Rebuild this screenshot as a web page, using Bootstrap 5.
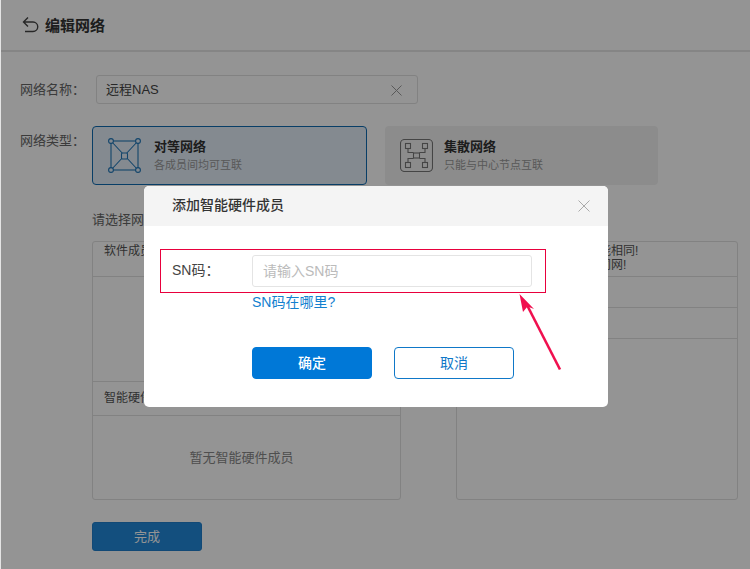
<!DOCTYPE html>
<html lang="zh">
<head>
<meta charset="utf-8">
<title>编辑网络</title>
<link rel="stylesheet" href="https://cdn.jsdelivr.net/npm/bootstrap@5.3.0/dist/css/bootstrap.min.css">
<style>
html,body{height:569px;overflow:hidden}
body{font-family:"Liberation Sans","Noto Sans CJK SC",sans-serif;color:#333;background:#fff;font-size:13px;line-height:1.4}
.page-shell{height:569px;border-left:1px solid #e4e4e4;position:relative}
.top-bar{height:52px;border-bottom:2px solid #e6e6e6;padding-left:21px;gap:6px}
.top-title{font-size:15px;font-weight:700;color:#333}
.form-area{padding:23px 0 0 19px}
.field-label{width:76px;color:#666;flex:none;padding-top:1px}
.name-box{width:322px;height:29px;border:1px solid #e0e0e0;border-radius:3px;padding:1px 15px 0 9px;color:#444}
.type-row{margin-top:22px}
.type-label{width:72px;padding-top:6px}
.type-card{height:59px;border-radius:4px;padding:0 15px}
.type-on{width:275px;background:#e4eef9;border:1px solid #0f6cb2;gap:13px}
.type-off{width:273px;background:#f2f2f2;margin-left:18px;gap:11px}
.type-name{font-size:13px;font-weight:700;color:#333;line-height:18px}
.type-desc{font-size:11px;color:#999;line-height:18px}
.choose-tip{margin:25px 0 0 72px;color:#666;height:20px;line-height:20px}
.panels{margin:11px 0 0 72px;gap:55px}
.panel-box{height:259px;border:1px solid #e0e0e0;border-radius:3px;color:#555;font-size:12px}
.panel-left{width:309px}
.panel-right{width:282px}
.panel-head{height:35px;border-bottom:1px solid #e0e0e0;padding:2px 11px;line-height:15px}
.panel-mid{height:105px;border-bottom:1px solid #e0e0e0}
.panel-head2{height:34px;border-bottom:1px solid #e0e0e0;padding:0 11px}
.empty-note{height:84px;color:#888;font-size:13px;padding-right:10px}
.right-head{height:35px;border-bottom:1px solid #e0e0e0;padding:2px 10px;line-height:14px;white-space:nowrap}
.right-row{height:31px;border-bottom:1px solid #e0e0e0}
.done-btn{margin:22px 0 0 72px;width:110px;height:29px;background:#2289da;color:#fff;border:1px solid #1f7fcc;border-radius:3px;font-size:13px;padding:1px 0 0}
.shade{position:absolute;inset:0;background:rgba(0,0,0,.42);z-index:10}
.dialog-box{position:absolute;left:144px;top:186px;width:464px;height:221px;background:#fff;border-radius:5px;overflow:hidden;z-index:20;border:0;color:#333}
.dialog-head{height:40px;background:#f4f4f4;padding:0 18px 0 28px;font-size:14px;font-weight:500;color:#333;border:0;border-radius:0}
.dialog-body{padding:29px 0 0 28px}
.sn-label{width:80px;font-size:14px;color:#444}
.sn-input{width:280px;height:32px;border:1px solid #e4e4e4;border-radius:3px;font-size:14px;padding:0 10px;color:#333;box-shadow:none}
.sn-input::placeholder{color:#bbb;opacity:1}
.where-link{margin:6px 0 0 80px;color:#1281cf;font-size:14px;text-decoration:none;line-height:19px;display:block}
.action-row{margin:35px 0 0 80px;gap:22px}
.act-main,.act-ghost{width:120px;height:32px;font-size:14px;padding:0;border-radius:4px}
.act-main{background:#0078d7;border:1px solid #0078d7;color:#fff;font-weight:500}
.act-ghost{background:#fff;border:1px solid #0f78c8;color:#0f78c8}
.mark-layer{position:absolute;left:0;top:0;z-index:30;pointer-events:none}
</style>
</head>
<body>
<div class="page-shell">
  <div class="top-bar d-flex align-items-center">
    <svg width="17" height="17" viewBox="0 0 17 17" fill="none" stroke="#444" stroke-width="1.4"><path d="M6 .5 1.500 5 6 9.500M1.500 5H11a4.700 4.700 0 0 1 0 9.500H3"/></svg>
    <span class="top-title">编辑网络</span>
  </div>
  <div class="form-area">
    <div class="d-flex align-items-center">
      <span class="field-label">网络名称：</span>
      <div class="name-box d-flex align-items-center justify-content-between"><span>远程NAS</span>
        <svg width="11" height="11" viewBox="0 0 11 11" stroke="#999" stroke-width="1"><path d="M.5.5l10 10M10.500.5l-10 10"/></svg></div>
    </div>
    <div class="type-row d-flex align-items-start">
      <span class="field-label type-label">网络类型：</span>
      <div class="type-card type-on d-flex align-items-center">
        <svg width="33" height="35" viewBox="0 0 33 35" fill="none" stroke="#1f77b8" stroke-width="1.1"><rect x="3" y="3" width="27" height="29"/><path d="M3 3 30 32M30 3 3 32"/><g fill="#e4eef9"><circle cx="3" cy="3" r="2.400"/><circle cx="30" cy="3" r="2.400"/><circle cx="3" cy="32" r="2.400"/><circle cx="30" cy="32" r="2.400"/><rect x="13.500" y="15" width="6" height="6" rx="1"/></g></svg>
        <div><div class="type-name">对等网络</div><div class="type-desc">各成员间均可互联</div></div>
      </div>
      <div class="type-card type-off d-flex align-items-center">
        <svg width="33" height="33" viewBox="0 0 33 33" fill="none" stroke="#777" stroke-width="1.100"><rect x=".5" y=".5" width="32" height="32" rx="4"/><rect x="5.500" y="4.500" width="5" height="5"/><rect x="22.500" y="4.500" width="5" height="5"/><rect x="5.500" y="23.500" width="5" height="5"/><rect x="22.500" y="23.500" width="5" height="5"/><rect x="13.500" y="14" width="6" height="5"/><path d="M8 9.500V13.500h5.500M25 9.500V13.500h-5.500M8 23.500V19.500h5.500M25 23.500V19.500h-5.500"/></svg>
        <div><div class="type-name">集散网络</div><div class="type-desc">只能与中心节点互联</div></div>
      </div>
    </div>
    <div class="choose-tip">请选择网络成员</div>
    <div class="panels d-flex">
      <div class="panel-box panel-left">
        <div class="panel-head">软件成员</div>
        <div class="panel-mid"></div>
        <div class="panel-head2 d-flex align-items-center">智能硬件成员</div>
        <div class="empty-note d-flex align-items-center justify-content-center">暂无智能硬件成员</div>
      </div>
      <div class="panel-box panel-right">
        <div class="right-head">所有成员的局域网网段不能相同!<br>否则各成员之间无法相互同网!</div>
        <div class="right-row"></div>
        <div class="right-row"></div>
      </div>
    </div>
    <button type="button" class="btn done-btn">完成</button>
  </div>
  <div class="shade"></div>
</div>
<div class="dialog-box modal-content">
  <div class="dialog-head modal-header">
    <span>添加智能硬件成员</span>
    <svg width="12" height="12" viewBox="0 0 12 12" stroke="#aaa" stroke-width="1"><path d="M.5.5l11 11M11.500.5l-11 11"/></svg>
  </div>
  <div class="dialog-body">
    <div class="d-flex align-items-center">
      <label class="sn-label" for="sn">SN码：</label>
      <input id="sn" class="form-control sn-input" placeholder="请输入SN码">
    </div>
    <a class="where-link" href="#">SN码在哪里?</a>
    <div class="action-row d-flex">
      <button type="button" class="btn act-main">确定</button>
      <button type="button" class="btn act-ghost">取消</button>
    </div>
  </div>
</div>
<svg class="mark-layer" width="750" height="569" viewBox="0 0 750 569" fill="none">
  <rect x="160.500" y="249.500" width="385" height="43" stroke="#e8003d" stroke-width="1"/>
  <path d="M560 369.500 527 305" stroke="#f0104f" stroke-width="2.600"/>
  <path d="M519.500 294 534 309 527.500 306.500 523 312Z" fill="#f0104f"/>
</svg>
</body>
</html>
